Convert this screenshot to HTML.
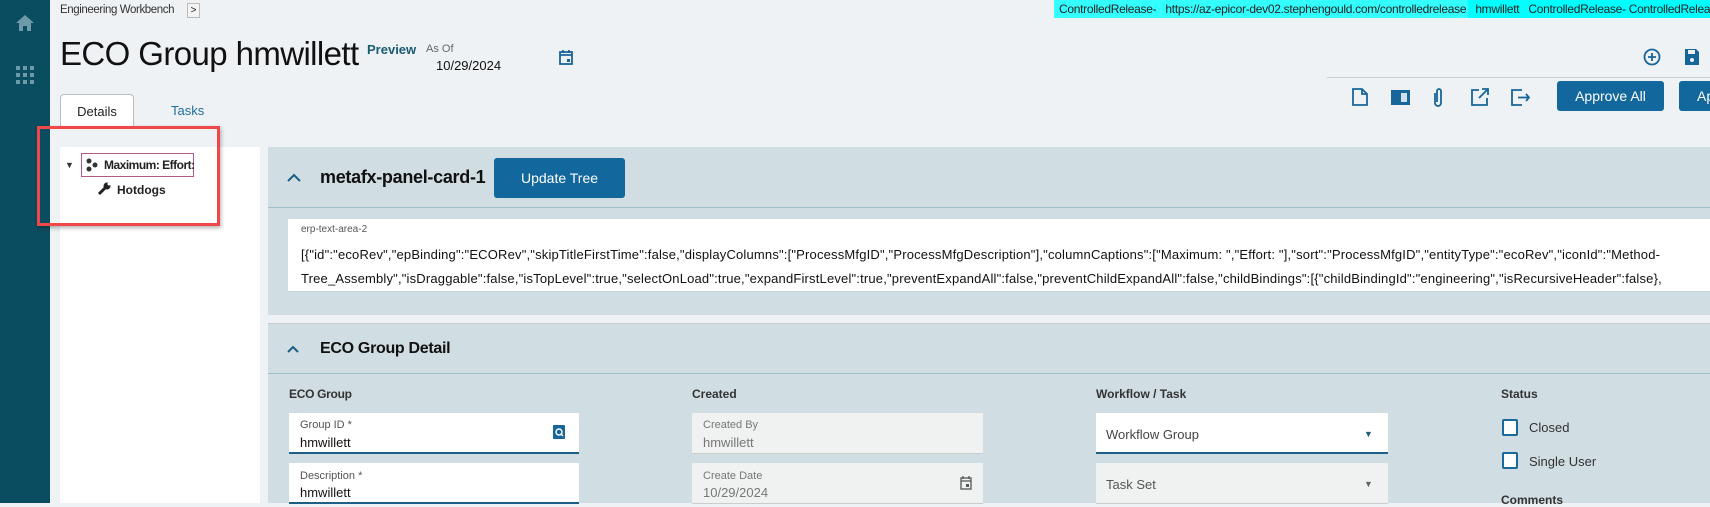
<!DOCTYPE html>
<html><head><meta charset="utf-8"><style>
*{margin:0;padding:0;box-sizing:border-box}
body{width:1710px;height:503px;overflow:hidden;background:#eef2f5;font-family:"Liberation Sans",sans-serif;color:#222;position:relative}
.a{position:absolute;white-space:nowrap}
.side{left:0;top:0;width:50px;height:503px;background:#0b4d60}
.btn{background:#12689c;color:#fff;border-radius:3px;font-size:14px;display:flex;align-items:center;justify-content:center}
.fld{background:#fff;border-bottom:2px solid #1e5f86}
.lbl{font-size:11px;color:#555}
.val{font-size:13px;color:#111}
.ro{background:#f0f1f1;border-bottom:1px solid #ccc}
.cb{width:16px;height:17px;border:2px solid #176a9a;border-radius:2px;background:#fff}
.ic{stroke:#17669a;fill:none;stroke-width:1.8}
</style></head><body>
<div class="a side"></div>
<svg class="a" style="left:15px;top:14px" width="20" height="18" viewBox="0 0 20 18"><path d="M10 1 L1 9 H4 V17 H8 V12 H12 V17 H16 V9 H19 Z" fill="#6d9aa8"/></svg>
<svg class="a" style="left:16px;top:66px" width="18" height="18"><g fill="#6d9aa8"><rect x="0" y="0" width="4" height="4"/><rect x="7" y="0" width="4" height="4"/><rect x="14" y="0" width="4" height="4"/><rect x="0" y="7" width="4" height="4"/><rect x="7" y="7" width="4" height="4"/><rect x="14" y="7" width="4" height="4"/><rect x="0" y="14" width="4" height="4"/><rect x="7" y="14" width="4" height="4"/><rect x="14" y="14" width="4" height="4"/></g></svg>

<div class="a" style="left:60px;top:4px;font-size:11.5px;color:#333;letter-spacing:-0.4px">Engineering Workbench</div>
<div class="a" style="left:187px;top:3px;width:13px;height:15px;border:1px solid #bbb;background:#f4f4f4;font-size:10px;text-align:center;line-height:13px">&gt;</div>

<div class="a" style="left:1054px;top:0;width:414px;height:18px;background:#33ffff"></div>
<div class="a" style="left:1468px;top:0;width:242px;height:18px;background:#00ffff"></div>
<div class="a" style="left:1059px;top:2px;font-size:12px;color:#222;letter-spacing:-0.3px">ControlledRelease-&nbsp;&nbsp; https://az-epicor-dev02.stephengould.com/controlledrelease&nbsp;&nbsp; hmwillett&nbsp;&nbsp; ControlledRelease- ControlledRelease</div>

<div class="a" style="left:60px;top:35px;font-size:33px;color:#111;letter-spacing:-0.6px">ECO Group hmwillett</div>
<div class="a" style="left:367px;top:42px;font-size:13px;font-weight:bold;color:#1b5a75">Preview</div>
<div class="a" style="left:426px;top:43px;font-size:11px;color:#666">As Of</div>
<div class="a" style="left:436px;top:58px;font-size:13px;color:#111">10/29/2024</div>
<svg class="a" style="left:559px;top:49px" width="14" height="16"><rect x="1" y="3" width="12" height="12" class="ic" stroke-width="1.5"/><path d="M1 6H13M4 1V4M10 1V4" class="ic" stroke-width="1.5"/><rect x="8" y="10" width="3" height="3" fill="#17669a"/></svg>

<svg class="a" style="left:1643px;top:48px" width="18" height="18"><circle cx="9" cy="9" r="7.5" class="ic" stroke-width="1.6"/><path d="M9 5V13M5 9H13" class="ic" stroke-width="1.6"/></svg>
<svg class="a" style="left:1684px;top:48px" width="16" height="18"><path d="M1 1H12L15 4V17H1Z" fill="#17669a"/><rect x="4" y="2" width="7" height="4" fill="#eef2f5"/><circle cx="8" cy="12" r="2" fill="#eef2f5"/></svg>
<div class="a" style="left:1327px;top:77px;width:383px;height:1px;background:#c9cfd3"></div>

<svg class="a" style="left:1352px;top:88px" width="16" height="18"><path d="M1 1H10L15 6V17H1Z M10 1V6H15" class="ic" stroke-width="1.6"/></svg>
<svg class="a" style="left:1391px;top:90px" width="19" height="15"><rect x="0" y="0" width="19" height="15" fill="#17669a"/><rect x="10" y="3" width="6" height="9" fill="#cfe0ea"/></svg>
<svg class="a" style="left:1432px;top:87px" width="12" height="21"><path d="M3 6V16A3 3 0 0 0 9 16V4A2 2 0 0 0 5 4V15" class="ic" stroke-width="1.5"/></svg>
<svg class="a" style="left:1471px;top:88px" width="18" height="18"><path d="M8 2H1V17H16V10M11 1H17V7M17 1L8 10" class="ic" stroke-width="1.6"/></svg>
<svg class="a" style="left:1511px;top:89px" width="20" height="17"><path d="M11 1H1V16H11M7 8.5H18M15 5L18 8.5L15 12" class="ic" stroke-width="1.6"/></svg>
<div class="a btn" style="left:1557px;top:81px;width:107px;height:30px">Approve All</div>
<div class="a btn" style="left:1679px;top:81px;width:60px;height:30px;justify-content:flex-start;padding-left:18px">Ap</div>

<div class="a" style="left:60px;top:94px;width:74px;height:33px;background:#fff;border:1px solid #b8bec3;border-bottom:none;border-radius:4px 4px 0 0;font-size:13px;text-align:center;line-height:33px">Details</div>
<div class="a" style="left:171px;top:103px;font-size:13px;color:#1f6e9c">Tasks</div>

<div class="a" style="left:60px;top:147px;width:200px;height:356px;background:#fff"></div>
<div class="a" style="left:37px;top:126px;width:183px;height:100px;border:3px solid #f04848;box-shadow:1px 2px 4px rgba(0,0,0,.3)"></div>
<div class="a" style="left:65px;top:160px;font-size:9px;color:#333">▼</div>
<div class="a" style="left:81px;top:153px;width:113px;height:24px;border:1px solid #b05a8c;background:#fff"></div>
<svg class="a" style="left:86px;top:158px" width="12" height="14"><circle cx="3" cy="3" r="2.5" fill="#333"/><circle cx="9" cy="7" r="2.5" fill="#333"/><circle cx="3" cy="11" r="2.5" fill="#333"/></svg>
<div class="a" style="left:104px;top:158px;font-size:12px;font-weight:bold;letter-spacing:-0.5px">Maximum: Effort:</div>
<svg class="a" style="left:97px;top:182px" width="14" height="14"><path d="M2 12L8 6" stroke="#222" stroke-width="3"/><circle cx="10" cy="4" r="3.5" fill="#222"/><circle cx="12" cy="2" r="1.5" fill="#fff"/></svg>
<div class="a" style="left:117px;top:183px;font-size:12px;font-weight:bold">Hotdogs</div>

<div class="a" style="left:268px;top:147px;width:1442px;height:168px;background:#d0dde2"></div>
<div class="a" style="left:268px;top:207px;width:1442px;height:1px;background:#9dbfcc"></div>
<svg class="a" style="left:287px;top:173px" width="14" height="9"><path d="M1 8L7 2L13 8" stroke="#1b5f80" stroke-width="2" fill="none"/></svg>
<div class="a" style="left:320px;top:167px;font-size:18px;font-weight:bold;color:#111;letter-spacing:-0.3px">metafx-panel-card-1</div>
<div class="a btn" style="left:494px;top:158px;width:131px;height:40px">Update Tree</div>
<div class="a" style="left:288px;top:219px;width:1422px;height:73px;background:#fff;border-bottom:1px solid #c8d2d7"></div>
<div class="a" style="left:301px;top:224px;font-size:10px;color:#555">erp-text-area-2</div>
<div class="a" style="left:301px;top:247px;font-size:13px;color:#111;letter-spacing:0.18px">[{"id":"ecoRev","epBinding":"ECORev","skipTitleFirstTime":false,"displayColumns":["ProcessMfgID","ProcessMfgDescription"],"columnCaptions":["Maximum: ","Effort: "],"sort":"ProcessMfgID","entityType":"ecoRev","iconId":"Method-</div>
<div class="a" style="left:301px;top:271px;font-size:13px;color:#111;letter-spacing:0.18px">Tree_Assembly","isDraggable":false,"isTopLevel":true,"selectOnLoad":true,"expandFirstLevel":true,"preventExpandAll":false,"preventChildExpandAll":false,"childBindings":[{"childBindingId":"engineering","isRecursiveHeader":false},</div>

<div class="a" style="left:268px;top:323px;width:1442px;height:180px;background:#d0dde2;border-top:1px solid #c4cdd2"></div>
<div class="a" style="left:268px;top:373px;width:1442px;height:1px;background:#9dbfcc"></div>
<svg class="a" style="left:287px;top:345px" width="12" height="8"><path d="M1 7L6 2L11 7" stroke="#1b5f80" stroke-width="2" fill="none"/></svg>
<div class="a" style="left:320px;top:340px;font-size:16px;font-weight:bold;color:#111;letter-spacing:-0.3px">ECO Group Detail</div>

<div class="a" style="left:289px;top:387px;font-size:12px;font-weight:bold;color:#333;letter-spacing:-0.3px">ECO Group</div>
<div class="a" style="left:692px;top:387px;font-size:12px;font-weight:bold;color:#333">Created</div>
<div class="a" style="left:1096px;top:387px;font-size:12px;font-weight:bold;color:#333">Workflow / Task</div>
<div class="a" style="left:1501px;top:387px;font-size:12px;font-weight:bold;color:#333">Status</div>

<div class="a fld" style="left:289px;top:413px;width:290px;height:41px"></div>
<div class="a lbl" style="left:300px;top:419px">Group ID *</div>
<div class="a val" style="left:300px;top:435px">hmwillett</div>
<svg class="a" style="left:553px;top:425px" width="12" height="14"><rect width="12" height="14" rx="1" fill="#17669a"/><circle cx="6" cy="7" r="3" stroke="#fff" stroke-width="1.4" fill="none"/><path d="M8 9L10 11" stroke="#fff" stroke-width="1.4"/></svg>
<div class="a fld" style="left:289px;top:463px;width:290px;height:41px"></div>
<div class="a lbl" style="left:300px;top:470px">Description *</div>
<div class="a val" style="left:300px;top:485px">hmwillett</div>

<div class="a ro" style="left:692px;top:413px;width:291px;height:41px"></div>
<div class="a lbl" style="left:703px;top:419px;color:#777">Created By</div>
<div class="a val" style="left:703px;top:435px;color:#777">hmwillett</div>
<div class="a ro" style="left:692px;top:463px;width:291px;height:41px"></div>
<div class="a lbl" style="left:703px;top:470px;color:#777">Create Date</div>
<div class="a val" style="left:703px;top:485px;color:#777">10/29/2024</div>
<svg class="a" style="left:960px;top:476px" width="12" height="14"><rect x="1" y="2" width="10" height="11" stroke="#555" stroke-width="1.3" fill="none"/><path d="M1 5H11M3 0V3M9 0V3" stroke="#555" stroke-width="1.3"/><rect x="6" y="8" width="3" height="3" fill="#555"/></svg>

<div class="a fld" style="left:1096px;top:413px;width:292px;height:41px"></div>
<div class="a" style="left:1106px;top:427px;font-size:13px;color:#444">Workflow Group</div>
<div class="a" style="left:1364px;top:429px;font-size:9px;color:#1b5f80">▼</div>
<div class="a ro" style="left:1096px;top:463px;width:292px;height:41px"></div>
<div class="a" style="left:1106px;top:477px;font-size:13px;color:#555">Task Set</div>
<div class="a" style="left:1364px;top:479px;font-size:9px;color:#666">▼</div>

<div class="a cb" style="left:1502px;top:419px"></div>
<div class="a" style="left:1529px;top:420px;font-size:13px;color:#333">Closed</div>
<div class="a cb" style="left:1502px;top:452px"></div>
<div class="a" style="left:1529px;top:454px;font-size:13px;color:#333">Single User</div>
<div class="a" style="left:1501px;top:493px;font-size:12px;font-weight:bold;color:#333">Comments</div>
</body></html>
